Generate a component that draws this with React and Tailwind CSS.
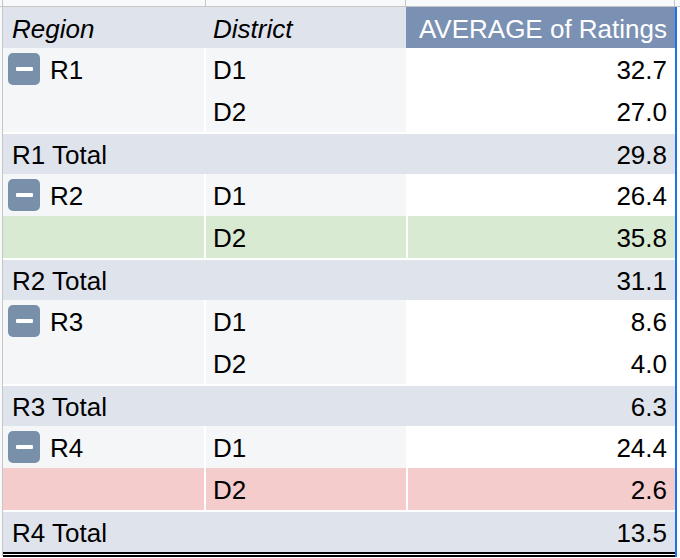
import React from 'react';

const groups = [
  { region: 'R1', rows: [['D1', '32.7', ''], ['D2', '27.0', '']], total: '29.8' },
  { region: 'R2', rows: [['D1', '26.4', ''], ['D2', '35.8', 'green']], total: '31.1' },
  { region: 'R3', rows: [['D1', '8.6', ''], ['D2', '4.0', '']], total: '6.3' },
  { region: 'R4', rows: [['D1', '24.4', ''], ['D2', '2.6', 'red']], total: '13.5' },
];

function Minus() {
  return (
    <span className="flex items-center justify-center w-[32px] h-[32px] rounded-[5px] bg-[#7890aa] shrink-0">
      <span className="block w-[17px] h-[4px] rounded-[1px] bg-white" />
    </span>
  );
}

function DataRow({ region, district, value, tone }) {
  const left = tone === 'green' ? 'bg-[#d9ead3]' : tone === 'red' ? 'bg-[#f4cccc]' : 'bg-[#f4f6f8]';
  const right = tone === 'green' ? 'bg-[#d9ead3]' : tone === 'red' ? 'bg-[#f4cccc]' : 'bg-white';
  return (
    <div className="grid grid-cols-[203px_200px_269px] h-[42px]">
      <div className={`${left} border-r-2 border-white flex items-center pl-[5px] gap-[10px]`}>
        {region && <Minus />}
        {region && <span className="pt-[2px]">{region}</span>}
      </div>
      <div className={`${left} flex items-center pl-[7px] pt-[2px]`}>{district}</div>
      <div className={`${right} border-l-2 border-white flex items-center justify-end pr-[8px] pt-[2px]`}>{value}</div>
    </div>
  );
}

function TotalRow({ label, value }) {
  return (
    <div className="grid grid-cols-[403px_269px] h-[42px] border-t-2 border-white bg-[#dfe3eb]">
      <div className="flex items-center pl-[9px] pt-[2px]">{label}</div>
      <div className="flex items-center justify-end pr-[8px] pt-[2px]">{value}</div>
    </div>
  );
}

export default function App() {
  return (
    <div className="w-[680px] h-[558px] overflow-hidden bg-white text-black text-[26px] leading-none font-['Liberation_Sans',Arial,sans-serif]">
      <div className="flex h-[7px] bg-[#f8f9fa] border-b border-[#c4c7c5]">
        <div className="w-[3px] border-r border-[#c4c7c5]" />
        <div className="w-[203px] border-r border-[#c4c7c5]" />
        <div className="w-[200px] border-r border-[#c4c7c5]" />
        <div className="w-[269px] border-r border-[#c4c7c5]" />
      </div>
      <div className="flex">
        <div className="w-[3px] h-[549px] bg-[#f8f9fa] border-r border-[#c4c7c5]" />
        <div className="w-[674px] border-r-2 border-[#1a73e8]">
          <div className="grid grid-cols-[203px_200px_269px] h-[41px] bg-[#dfe3eb]">
            <div className="flex items-center pl-[9px] pt-[2px] italic">Region</div>
            <div className="flex items-center pl-[7px] pt-[2px] italic">District</div>
            <div className="flex items-center justify-end pr-[8px] pt-[2px] bg-[#7b91b4] text-white">AVERAGE of Ratings</div>
          </div>
          {groups.map((g) => (
            <React.Fragment key={g.region}>
              {g.rows.map(([d, v, tone], i) => (
                <DataRow key={d} region={i === 0 ? g.region : ''} district={d} value={v} tone={tone} />
              ))}
              <TotalRow label={`${g.region} Total`} value={g.total} />
            </React.Fragment>
          ))}
          <div className="h-[5px] border-y-[2px] border-black bg-white" />
        </div>
      </div>
    </div>
  );
}
